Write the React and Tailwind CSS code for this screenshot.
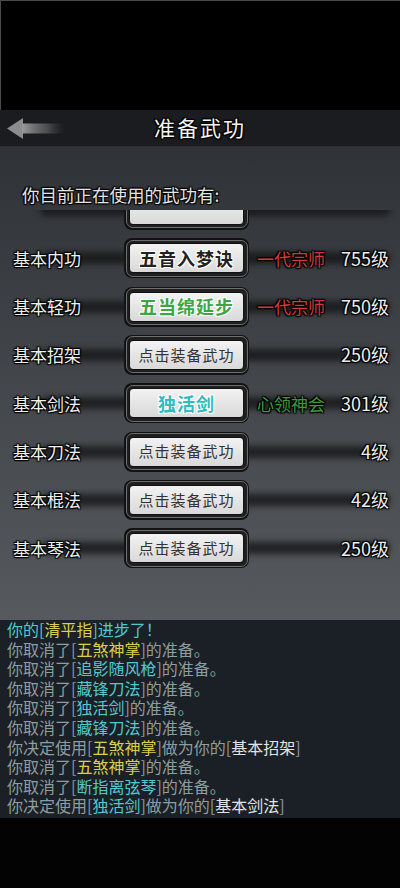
import React from 'react';

const FONT = { fontFamily: '"Noto Sans CJK SC", "Noto Sans", sans-serif' };

const rows = [
  { name: '基本内功', skill: '五音入梦诀', tone: 'dark', grade: '一代宗师', gradeColor: 'text-[#d23a3a]', level: '755级' },
  { name: '基本轻功', skill: '五当绵延步', tone: 'green', grade: '一代宗师', gradeColor: 'text-[#d23a3a]', level: '750级' },
  { name: '基本招架', skill: null, level: '250级' },
  { name: '基本剑法', skill: '独活剑', tone: 'cyan', grade: '心领神会', gradeColor: 'text-[#3f9a3f]', level: '301级' },
  { name: '基本刀法', skill: null, level: '4级' },
  { name: '基本棍法', skill: null, level: '42级' },
  { name: '基本琴法', skill: null, level: '250级' },
];

const G = 'text-[#8e9d9f]';
const Y = 'text-[#d9d04c]';
const C = 'text-[#52c8cf]';
const W = 'text-[#e2e2e2]';

const log = [
  [['你的[', C], ['清平指', Y], [']进步了！', C]],
  [['你取消了[', G], ['五煞神掌', Y], [']的准备。', G]],
  [['你取消了[', G], ['追影随风枪', C], [']的准备。', G]],
  [['你取消了[', G], ['藏锋刀法', C], [']的准备。', G]],
  [['你取消了[', G], ['独活剑', C], [']的准备。', G]],
  [['你取消了[', G], ['藏锋刀法', C], [']的准备。', G]],
  [['你决定使用[', G], ['五煞神掌', Y], [']做为你的[', G], ['基本招架', W], [']', G]],
  [['你取消了[', G], ['五煞神掌', Y], [']的准备。', G]],
  [['你取消了[', G], ['断指离弦琴', C], [']的准备。', G]],
  [['你决定使用[', G], ['独活剑', C], [']做为你的[', G], ['基本剑法', W], [']', G]],
];

const outline = '[text-shadow:0_0_2px_#000,1px_1px_1px_#000,-1px_-1px_1px_#000,1px_-1px_1px_#000,-1px_1px_1px_#000]';
const lightOutline = '[text-shadow:0_0_1px_#fff,1px_1px_0_#fff,-1px_-1px_0_#fff,1px_-1px_0_#fff,-1px_1px_0_#fff]';

function SkillButton({ skill, tone, blank }) {
  const toneClass =
    tone === 'green' ? 'text-[#38a845] font-bold text-[18px]' :
    tone === 'cyan' ? 'text-[#2fbcbc] font-bold text-[18px]' :
    tone === 'dark' ? 'text-[#222] font-bold text-[18px]' :
    'text-[#333] text-[15px]';
  return (
    <div className="rounded-[8px] bg-[#121212] p-[1.5px]">
      <div className="rounded-[7px] border border-[#6e6e6e] bg-[#1f1f20] p-[2.5px]">
        <div className={`flex h-[30px] w-[115px] items-center justify-center rounded-[4px] border border-[#111] bg-gradient-to-b from-[#f2f2f2] to-[#d9d9d9] tracking-[1px] ${toneClass} ${skill ? lightOutline : ''}`}>
          {blank ? '' : skill || '点击装备武功'}
        </div>
      </div>
    </div>
  );
}

function Row({ row }) {
  return (
    <div className="relative flex h-[48.33px] items-center">
      <div className="absolute left-[40px] right-[10px] top-1/2 h-[12px] -translate-y-1/2 rounded-full bg-[#141517]/80 blur-[3px]" />
      <div className={`relative w-[124px] pl-[13px] text-[17px] text-[#f0f0f0] ${outline}`}>{row.name}</div>
      <div className="relative">
        <SkillButton skill={row.skill} tone={row.tone} blank={row.blank} />
      </div>
      <div className={`relative w-[82px] pl-[8px] text-[17px] whitespace-nowrap ${row.gradeColor || ''} ${outline}`}>{row.grade || ''}</div>
      <div className={`relative flex-1 pr-[11px] text-right text-[18px] text-[#eeeeee] ${outline}`}>{row.level}</div>
    </div>
  );
}

export default function App() {
  return (
    <div className="flex h-[888px] w-[400px] flex-col bg-black" style={FONT}>
      <div className="h-[110px] shrink-0 border-l border-t border-[#4a4a4a] bg-black" />

      {/* header */}
      <div className="relative flex h-[37px] shrink-0 items-center justify-center border-b border-[#2c2e31] bg-[#1a1c1f]">
        <svg className="absolute left-[7px] top-[7px]" width="58" height="23" viewBox="0 0 58 23">
          <defs>
            <linearGradient id="tail" x1="0" x2="1" y1="0" y2="0">
              <stop offset="0" stopColor="#9a9a9a" />
              <stop offset="0.6" stopColor="#6a6a6a" stopOpacity="0.6" />
              <stop offset="1" stopColor="#444" stopOpacity="0" />
            </linearGradient>
          </defs>
          <polygon points="0,11.5 16,1 16,22" fill="#8c8c8c" />
          <rect x="15" y="6.5" width="43" height="10" fill="url(#tail)" />
        </svg>
        <div className={`text-[21px] tracking-[2px] text-[#f4f4f4] ${outline}`}>准备武功</div>
      </div>

      {/* panel */}
      <div className="flex h-[473px] shrink-0 flex-col bg-gradient-to-b from-[#2f3237] via-[#43464b] to-[#56595d]">
        <div className={`pl-[22px] pt-[36px] text-[17.5px] leading-[24px] text-[#e4e4e4] ${outline}`}>你目前正在使用的武功有:</div>
        <div className="mt-[3px] flex-1 overflow-hidden">
          <div className="-mt-[24.2px]">
            <Row row={{ name: '', skill: '', level: '', blank: true }} />
            {rows.map((r) => (
              <Row key={r.name} row={r} />
            ))}
          </div>
        </div>
      </div>

      {/* log */}
      <div className="h-[198px] shrink-0 bg-[#1b2026] pl-[7px] text-[16px] leading-[19.6px]">
        {log.map((line, i) => (
          <div key={i} className="whitespace-nowrap">
            {line.map(([t, c], j) => (
              <span key={j} className={c}>{t}</span>
            ))}
          </div>
        ))}
      </div>

      <div className="flex-1 bg-[#030303]" />
    </div>
  );
}
